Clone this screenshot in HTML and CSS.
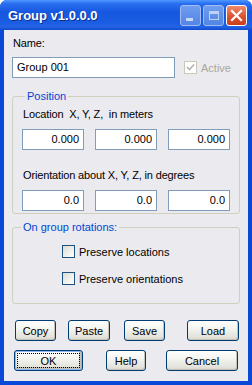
FILE: index.html
```html
<!DOCTYPE html>
<html lang="en">
<head>
    <meta charset="UTF-8">
    <meta name="viewport" content="width=device-width, initial-scale=1.0">
    <title>Group v1.0.0.0</title>
    <link rel="stylesheet" href="styles.css">
</head>
<body>
    <div class="window">
        <div class="titlebar">
            <span class="title">Group v1.0.0.0</span>
            <div class="controls">
                <span class="ctl ctl-min"><i></i></span>
                <span class="ctl ctl-max"><i></i></span>
                <span class="ctl ctl-close">
                    <svg width="13" height="13" viewBox="0 0 13 13">
                        <path d="M2 2 L11 11 M11 2 L2 11" stroke="#fff" stroke-width="2.2" stroke-linecap="square"/>
                    </svg>
                </span>
            </div>
        </div>

        <div class="client">
            <div class="label">Name:</div>
            <div class="name-row">
                <div class="textbox name-box">Group 001</div>
                <div class="check disabled">
                    <span class="box">
                        <svg width="9" height="9" viewBox="0 0 9 9">
                            <path d="M1 4 L3.5 6.5 L8 1.5" fill="none" stroke="#b5b3ae" stroke-width="1.6"/>
                        </svg>
                    </span>
                    Active
                </div>
            </div>

            <fieldset class="group position">
                <legend>Position</legend>
                <div class="label">Location&nbsp; X, Y, Z,&nbsp; in meters</div>
                <div class="triple">
                    <div class="textbox num">0.000</div>
                    <div class="textbox num">0.000</div>
                    <div class="textbox num">0.000</div>
                </div>
                <div class="label second">Orientation about X, Y, Z, in degrees</div>
                <div class="triple">
                    <div class="textbox num">0.0</div>
                    <div class="textbox num">0.0</div>
                    <div class="textbox num">0.0</div>
                </div>
            </fieldset>

            <fieldset class="group rotations">
                <legend>On group rotations:</legend>
                <div class="check-list">
                    <div class="check"><span class="box"></span>Preserve locations</div>
                    <div class="check"><span class="box"></span>Preserve orientations</div>
                </div>
            </fieldset>

            <div class="btn-row">
                <button class="btn b-copy">Copy</button>
                <button class="btn b-paste">Paste</button>
                <button class="btn b-save">Save</button>
                <button class="btn b-load">Load</button>
            </div>
            <div class="btn-row last">
                <button class="btn b-ok default">OK</button>
                <button class="btn b-help">Help</button>
                <button class="btn b-cancel">Cancel</button>
            </div>
        </div>
    </div>
</body>
</html>
```

FILE: styles.css
```css
body {
    margin: 0;
    font-family: "Liberation Sans", Arial, sans-serif;
    font-size: 11px;
    color: #000;
}
.window {
    width: 252px;
    height: 385px;
    box-sizing: border-box;
    background: #0a48d8;
    padding: 0 4px 4px 4px;
    border-radius: 7px 7px 0 0;
    display: flex;
    flex-direction: column;
}
.titlebar {
    height: 30px;
    margin: 0 -4px;
    padding: 0 5px 0 8px;
    border-radius: 7px 7px 0 0;
    background: linear-gradient(to bottom, #4f97ff 0%, #2a6ff0 12%, #1657e0 40%, #1a5ce2 75%, #2463e4 90%, #0f49d0 100%);
    display: flex;
    align-items: center;
    justify-content: space-between;
}
.title {
    color: #fff;
    font-weight: bold;
    font-size: 13px;
    text-shadow: 1px 1px 0 #0c2f8e;
}
.controls {
    display: flex;
    gap: 2px;
    margin-top: 1px;
}
.ctl {
    width: 21px;
    height: 21px;
    box-sizing: border-box;
    border: 1px solid #fff;
    border-radius: 3px;
    display: flex;
    align-items: center;
    justify-content: center;
}
.ctl-min, .ctl-max {
    background: linear-gradient(to bottom, #7ea8f0, #5d8de6);
    border-color: #b9cdf5;
    opacity: 0.85;
}
.ctl-min i {
    width: 7px;
    height: 3px;
    background: #e9f0ff;
    margin-top: 8px;
    margin-right: 3px;
}
.ctl-max i {
    width: 10px;
    height: 9px;
    box-sizing: border-box;
    border: 1px solid #dbe6fb;
    border-top-width: 3px;
}
.ctl-close {
    background: linear-gradient(to bottom, #f08a6a, #d9502c 60%, #c9401f);
}

.client {
    flex: 1;
    background: #ebeaef;
    padding: 7px 8px 0 8px;
    display: flex;
    flex-direction: column;
}
.label {
    height: 13px;
    line-height: 13px;
    padding-left: 1px;
    letter-spacing: -0.15px;
}
.name-row {
    display: flex;
    align-items: center;
    margin-top: 7px;
}
.textbox {
    box-sizing: border-box;
    height: 21px;
    line-height: 19px;
    background: #fff;
    border: 1px solid #7f9db9;
    padding: 0 4px;
    white-space: nowrap;
}
.name-box {
    width: 163px;
}
.check {
    display: flex;
    align-items: center;
    gap: 4px;
    height: 13px;
}
.check.disabled {
    color: #aca899;
    margin-left: 9px;
}
.box {
    width: 13px;
    height: 13px;
    box-sizing: border-box;
    border: 1px solid #1c5180;
    background: linear-gradient(135deg, #dcdbd5, #f5f5f2 70%, #fff);
    display: flex;
    align-items: center;
    justify-content: center;
}
.check.disabled .box {
    border-color: #cac8bb;
    background: #fff;
}

.group {
    margin: 0;
    border: 1px solid #d0d0bf;
    border-radius: 3px;
    padding: 0 9px;
    min-width: 0;
}
.group legend {
    color: #0046d5;
    padding: 0 2px;
    margin-left: 3px;
}
.position {
    margin-top: 12px;
    padding-top: 6px;
    padding-bottom: 2px;
}
.label.second {
    margin-top: 19px;
}
.triple {
    display: flex;
    justify-content: space-between;
    margin-top: 8px;
}
.num {
    width: 62px;
    text-align: right;
}
.rotations {
    margin-top: 7px;
    padding: 0;
}
.rotations legend {
    margin-left: 8px;
}
.check-list {
    display: flex;
    flex-direction: column;
    gap: 14px;
    padding: 12px 0 18px 49px;
}

.btn-row {
    display: flex;
    align-items: center;
    margin-top: 16px;
}
.btn-row.last {
    margin-top: 9px;
}
.btn {
    font: inherit;
    font-size: 11px;
    color: #000;
    height: 21px;
    padding: 0;
    border: 1px solid #003c74;
    border-radius: 3px;
    background: linear-gradient(to bottom, #ffffff 0%, #f4f4f0 40%, #e3e3dc 85%, #d6d0c5 100%);
    box-shadow: inset -1px -1px 0 #c5c2b8;
}
.btn.default {
    box-shadow: inset 0 0 0 1px #8fb7f4, inset -1px -1px 0 2px #c5c2b8;
    outline: 1px dotted #000;
    outline-offset: -4px;
}
.b-copy { width: 41px; margin-left: 3px; }
.b-paste { width: 42px; margin-left: 12px; }
.b-save { width: 41px; margin-left: 14px; }
.b-load { width: 52px; margin-left: 22px; }
.b-ok { width: 69px; margin-left: 2px; }
.b-help { width: 40px; margin-left: 23px; }
.b-cancel { width: 72px; margin-left: 20px; }
```
